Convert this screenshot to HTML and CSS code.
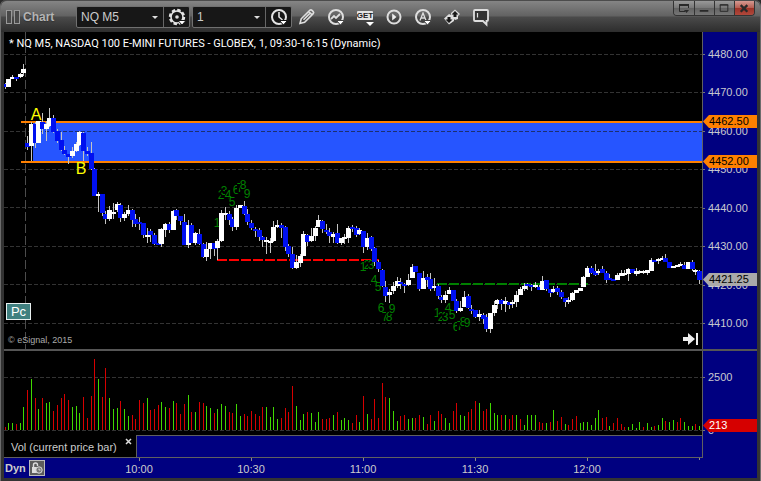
FILE: index.html
```html
<!DOCTYPE html>
<html lang="en">
<head>
<meta charset="utf-8">
<title>Chart</title>
<link rel="stylesheet" href="styles.css">
</head>
<body>
<main class="window">
  <header class="titlebar">
    <span class="grip"><i></i><i></i></span>
    <h1 class="title">Chart</h1>
    <div class="combo">
      <span class="pick pick-symbol"><select aria-label="Symbol"><option>NQ M5</option></select></span>
      <button class="combo-btn" aria-label="Symbol settings">
        <svg width="22" height="20" viewBox="0 0 22 20"><circle cx="11" cy="10" r="7" fill="none" stroke="#e4e4e4" stroke-width="2.4" stroke-dasharray="3.4 2.1"/><circle cx="11" cy="10" r="6" fill="none" stroke="#e4e4e4" stroke-width="1.6"/><circle cx="11" cy="10" r="1.8" fill="#ddd"/><path d="M12 13.500h8l-4 4.500z" fill="#fff" stroke="#161616"/></svg>
      </button>
    </div>
    <div class="combo">
      <span class="pick pick-interval"><select aria-label="Interval"><option>1</option></select></span>
      <button class="combo-btn" aria-label="Time template">
        <svg width="22" height="20" viewBox="0 0 22 20"><circle cx="11" cy="10" r="7" fill="none" stroke="#e4e4e4" stroke-width="2"/><path d="M11 5v5l3.500 3" fill="none" stroke="#e4e4e4" stroke-width="1.600"/><path d="M11.500 13.500h8l-4 4.500z" fill="#fff" stroke="#161616"/></svg>
      </button>
    </div>
    <nav class="tools" aria-label="Chart tools">
      <button aria-label="Draw"><svg width="20" height="20" viewBox="0 0 20 20"><path d="M3 16.500l1.200-4.700L13 3.200q1-.8 2 .2l1.200 1.200q1 1 0 2L7.600 15.300zM6.500 12.800l7-7M11.700 4.500l3.500 3.500" fill="none" stroke="#dedede" stroke-width="1.600"/></svg></button>
      <button aria-label="Studies"><svg width="20" height="20" viewBox="0 0 20 20"><circle cx="10" cy="10" r="7" fill="none" stroke="#dedede" stroke-width="2"/><path d="M5 12l3-3 2 2 4-4" fill="none" stroke="#dedede" stroke-width="1.800"/><path d="M10.500 13.500h8l-4 4.500z" fill="#fff" stroke="#444"/></svg></button>
      <button class="get" aria-label="Get studies"><span>GET</span></button>
      <button aria-label="Playback"><svg width="20" height="20" viewBox="0 0 20 20"><circle cx="10" cy="10" r="6.500" fill="none" stroke="#dedede" stroke-width="2"/><path d="M8.200 6.500v7l4.300-3.500z" fill="#eee"/></svg></button>
      <button aria-label="Alerts"><svg width="20" height="20" viewBox="0 0 20 20"><circle cx="10" cy="10" r="7" fill="none" stroke="#dedede" stroke-width="2"/><path d="M7 13.500l3-7.500 3 7.500M8 11h4" fill="none" stroke="#dedede" stroke-width="1.300"/><path d="M10.500 13.500h8l-4 4.500z" fill="#fff" stroke="#444"/></svg></button>
      <button aria-label="Trade"><svg width="20" height="20" viewBox="0 0 20 20"><path d="M2 11.500l5-4.500 2 1V6l4-3.500L18 7l-2 2v3l-3 1-1-1v2l-5 3.500z" fill="#dedede"/><path d="M13 4l3.500 3.500h-2V10h-3V7.500h-2zM7 16l-3.500-3.500h2V10h3v2.500h2z" fill="#181818"/></svg></button>
      <button aria-label="Comment"><svg width="20" height="20" viewBox="0 0 20 20"><path d="M4 3h12q1 0 1 1v9q0 1-1 1h-.5v3.500L12 14H4q-1 0-1-1V4q0-1 1-1z" fill="#333" stroke="#dedede" stroke-width="1.800"/><path d="M6.500 6v4.500" stroke="#dedede" stroke-width="1.200"/></svg></button>
    </nav>
    <div class="controls">
      <button aria-label="Window menu"><svg width="20" height="14" viewBox="0 0 20 14"><path d="M11 10.500H5.500v-7h9V7" fill="none" stroke="#292929"/><path d="M5 4h10" stroke="#292929" stroke-width="2"/><path d="M10 9h5l-2.500 3z" fill="#292929"/></svg></button>
      <button aria-label="Minimize"><svg width="20" height="14" viewBox="0 0 20 14"><path d="M5 10h9" stroke="#292929" stroke-width="2"/></svg></button>
      <button aria-label="Maximize"><svg width="20" height="14" viewBox="0 0 20 14"><path d="M5.500 3.500h8v7h-8zM5 4h9" fill="none" stroke="#292929"/></svg></button>
      <button class="close" aria-label="Close"><svg width="20" height="14" viewBox="0 0 20 14"><path d="M6 4l7 7M13 4l-7 7" stroke="#292929" stroke-width="2.400"/></svg></button>
    </div>
  </header>

  <section class="chart">
    <div class="pane">
      <svg id="price" class="plot" viewBox="4 32 698 317" role="img" aria-label="Price candles"></svg>
      <p class="caption">* NQ M5, NASDAQ 100 E-MINI FUTURES - GLOBEX, 1, 09:30-16:15 (Dynamic)</p>
      <div class="notes">
        <button class="pc">Pc</button>
        <small>© eSignal, 2015</small>
      </div>
      <button class="latest" aria-label="Go to latest bar"><svg width="16" height="16" viewBox="0 0 16 16"><path d="M0 6h5V2l7 6-7 6v-4H0z" fill="#eee"/><path d="M14 2v12" stroke="#eee" stroke-width="2"/></svg></button>
    </div>
    <div class="axis">
      <ol class="scale scale-price">
        <li>4480.00</li><li>4470.00</li><li>4460.00</li><li>4450.00</li><li>4440.00</li><li>4430.00</li><li>4420.00</li><li>4410.00</li>
      </ol>
      <span class="tag tag-high">4462.50</span>
      <span class="tag tag-low">4452.00</span>
      <span class="tag tag-last">4421.25</span>
    </div>
    <div class="divider"></div>
    <div class="pane">
      <svg id="volume" class="plot" viewBox="4 351 698 84" role="img" aria-label="Volume bars"></svg>
    </div>
    <div class="axis">
      <ol class="scale scale-volume"><li>2500</li><li>0</li></ol>
      <span class="tag tag-vol">213</span>
    </div>
    <div class="tabs">
      <div class="tab"><span>Vol (current price bar)</span><button aria-label="Close tab"><svg width="7" height="7" viewBox="0 0 7 7"><path d="M1 1l5 5M6 1l-5 5" stroke="#ddd" stroke-width="1.500"/></svg></button></div>
    </div>
    <div class="axis"></div>
    <footer class="timeline">
      <div class="mode"><span>Dyn</span><button aria-label="Lock time"><svg width="14" height="14" viewBox="0 0 14 14"><path d="M3.500 7V4a2 2 0 0 1 4 0v1" fill="none" stroke="#ddd" stroke-width="1.400"/><path d="M2 6h6v6H2z" fill="#ddd"/><circle cx="9" cy="9" r="3.200" fill="#777" stroke="#ddd"/><path d="M9 7.500V9h1.500" fill="none" stroke="#ddd"/></svg></button></div>
      <time>10:00</time><time>10:30</time><time>11:00</time><time>11:30</time><time>12:00</time>
      <span class="end"></span>
    </footer>
  </section>
</main>
<script src="chart.js"></script>
</body>
</html>
```
FILE: styles.css
```css
* { box-sizing: border-box; }
body {
  margin: 0;
  background: #2b2b2b;
  font: 11px/14px "Liberation Sans", Arial, sans-serif;
  color: #ccc;
}
button { margin: 0; padding: 0; border: 0; background: none; font: inherit; color: inherit; display: flex; align-items: center; justify-content: center; }
svg { display: block; }
.window {
  background: #333;
  border: solid #6c6c6c;
  border-width: 0 1px 1px;
  border-radius: 6px 6px 0 0;
  padding: 0 3px 3px;
}
.titlebar {
  display: flex;
  align-items: center;
  height: 32px;
  margin: 0 -3px;
  padding-left: 5px;
  border-top: 1px solid #4c4c4c;
  border-radius: 6px 6px 0 0;
  background: linear-gradient(#858585, #626262 48%, #4a4a4a 52%, #2d2d2d);
}
.grip { display: flex; gap: 2px; }
.grip i { width: 6px; height: 14px; border: 1px solid #999; background: #484848; }
.title { margin: 0 0 0 3px; width: 53px; font-size: 12px; line-height: 16px; color: #b4b4b4; text-shadow: 0 1px 1px #333; }
.combo { display: flex; height: 22px; margin-right: 2px; border: 1px solid #707070; border-radius: 2px; background: #171717; }
.pick { position: relative; display: flex; }
.pick::after { content: ""; position: absolute; right: 5px; top: 9px; border: 3px solid transparent; border-top-color: #ddd; border-bottom: 0; pointer-events: none; }
.pick select { appearance: none; border: 0; background: none; width: 100%; padding: 0 4px; color: #ccc; font: 12px/20px "Liberation Sans", Arial, sans-serif; }
.pick-symbol { width: 86px; }
.pick-interval { width: 72px; }
.combo-btn { width: 26px; border-left: 1px solid #666; }
.tools { display: flex; align-items: center; gap: 9px; margin-left: 3px; }
.tools button { width: 20px; height: 20px; }
.get { position: relative; font: bold 8px/9px "Liberation Sans", Arial, sans-serif; }
.get span { margin-bottom: 2px; background: #e4e4e4; color: #222; border-radius: 1px; }
.get::after { content: ""; position: absolute; right: 1px; bottom: 1px; border: 4px solid transparent; border-top-color: #fff; border-bottom: 0; }
.controls { display: flex; align-self: flex-start; margin: 0 5px 0 auto; border: 1px solid #333; border-top: 0; border-radius: 0 0 4px 4px; overflow: hidden; }
.controls button { width: 20px; height: 14px; background: linear-gradient(#999, #777 50%, #626262 50%, #767676); }
.controls button + button { border-left: 1px solid #333; }
.controls .close { background: linear-gradient(#d59a92, #b65c50 50%, #9c3226 50%, #b0483c); }

.chart { display: grid; grid-template-columns: minmax(0, 1fr) 55px; background: #000; }
.pane { position: relative; min-width: 0; }
.plot { width: 100%; height: auto; }
.plot text { text-anchor: middle; font-family: "Liberation Sans", Arial, sans-serif; }
.divider { grid-column: 1 / -1; height: 2px; background: #555; }
.axis { position: relative; border-left: 1px solid #606060; background: #000080; }
.scale { display: flex; flex-direction: column; justify-content: space-between; height: 100%; margin: 0; padding: 0 0 0 5px; list-style: none; color: #c8c8d0; }
.scale li { position: relative; }
.scale li::before { content: ""; position: absolute; left: -5px; top: 7px; width: 2px; height: 1px; background: #777; }
.scale-price { padding-top: 15px; padding-bottom: 19px; }
.scale-volume { height: 86px; margin-bottom: -2px; padding-top: 19px; }
.tag { position: absolute; left: 0; right: 0; height: 13px; padding-left: 6px; line-height: 13px; color: #000; clip-path: polygon(0 50%, 6px 0, 100% 0, 100% 100%, 6px 100%); }
.tag-high { top: 83px; background: #ff8000; }
.tag-low { top: 123px; background: #ff8000; }
.tag-last { top: 241px; background: #aaa; }
.tag-vol { top: 68px; background: #d60000; color: #fff; }
.caption { position: absolute; left: 5px; top: 5px; margin: 0; font-family: Roboto, "Liberation Sans", sans-serif; color: #fff; white-space: nowrap; }
.notes { position: absolute; left: 2px; bottom: 3px; display: flex; flex-direction: column; align-items: flex-start; gap: 15px; }
.notes small { padding-left: 2px; font-size: 9px; line-height: 11px; color: #aaa; }
.pc { width: 25px; height: 17px; border: 1px solid #e8f0f0; background: #408080; color: #fff; font-size: 13px; }
.latest { position: absolute; right: 3px; bottom: 2px; }

.tabs { display: flex; border-bottom: 1px solid #606060; }
.tabs::after { content: ""; flex: 1; border: solid #606060; border-width: 1px 0 0 1px; background: #000080; }
.tab { display: flex; width: 132px; height: 22px; padding: 5px 4px 0 7px; justify-content: space-between; }
.tab button { align-self: flex-start; margin-top: -2px; }
.timeline { grid-column: 1 / -1; display: grid; grid-template-columns: 79fr repeat(5, 112fr) 59fr 55px; height: 20px; background: #000080; }
.timeline time { position: relative; padding-top: 4px; text-align: center; }
.timeline time::before { content: ""; position: absolute; left: 50%; top: 0; width: 1px; height: 3px; background: #888; }
.end { justify-self: end; width: 3px; height: 2px; border-left: 1px solid #888; }
.mode { display: flex; align-items: center; gap: 3px; padding-left: 1px; font-weight: bold; }
.mode button { width: 16px; height: 16px; border: 1px solid #bbb; background: #5c5c5c; }
```
FILE: chart.js
```js
const NS = "http://www.w3.org/2000/svg";
const FIRST_BAR = -6;
const barX = (n) => Math.floor(27.55 + 3.7333 * (n + FIRST_BAR));

function add(parent, name, attrs, text) {
  const node = document.createElementNS(NS, name);
  for (const key in attrs) node.setAttribute(key, attrs[key]);
  if (text) node.textContent = text;
  parent.appendChild(node);
}
const box = (p, x, y, width, height, fill) => add(p, "rect", { x, y, width, height, fill });
const dash = (p, x1, y1, x2, y2, stroke, pattern, w) =>
  add(p, "line", { x1, y1, x2, y2, stroke, "stroke-dasharray": pattern, "stroke-width": w });

// direction, high, body top, body bottom, low
const candles = `b 83 84 87 89,w 79 79 87 87,w 75 77 79 79,b 77 77 79 81,w 73 74 77 78,w 64 69 73 76,
b 136 143 147 150,w 122 124 146 161,b 122 124 143 148,w 121 121 143 143,b 113 122 129 134,w 121 124 129 141,w 108 118 126 127,b 115 118 132 133,b 129 131 141 143,b 132 140 150 151,
b 146 150 154 155,b 154 154 157 164,w 147 151 156 158,w 142 144 151 152,w 131 132 145 146,b 132 133 151 161,b 147 151 154 156,b 142 153 169 170,b 168 169 196 196,w 192 194 196 212,
b 194 194 213 216,b 211 214 219 224,w 206 210 219 221,w 203 212 214 219,w 202 204 210 212,b 203 205 218 222,w 212 214 218 221,w 205 210 214 216,b 209 210 220 227,b 214 219 224 227,
b 217 222 224 230,b 223 223 235 238,w 228 235 237 243,b 229 231 235 242,b 233 235 244 245,b 229 243 245 245,w 228 229 244 247,w 223 224 230 237,b 222 224 230 233,w 210 211 230 230,
b 209 210 216 220,b 216 216 221 225,b 214 222 245 245,w 220 225 245 248,b 223 225 243 243,w 232 233 243 245,b 229 234 244 245,b 243 244 257 258,w 242 249 257 261,w 243 243 249 259,
b 243 243 249 256,w 239 241 248 260,w 210 213 241 242,w 207 213 215 220,b 211 214 220 225,b 217 219 227 231,w 205 208 227 230,w 205 205 208 208,b 201 206 214 215,b 209 214 222 225,
b 220 223 228 230,b 227 229 231 237,b 228 230 237 241,b 236 237 240 247,w 237 240 242 254,w 238 241 243 253,w 221 227 241 242,w 220 225 227 228,b 223 225 228 238,b 226 227 247 251,
b 244 246 254 257,b 247 254 268 269,w 255 262 268 269,w 254 256 263 267,w 231 234 256 256,b 234 235 242 246,w 228 236 241 242,w 226 228 236 241,w 215 220 227 227,b 220 221 229 233,
b 224 230 232 234,b 228 232 236 243,w 232 234 237 243,b 224 233 243 244,w 238 238 243 245,w 234 237 239 244,w 226 228 238 243,b 225 227 229 232,b 226 228 235 237,w 228 230 234 235,
b 231 231 247 253,w 233 238 247 250,b 236 237 249 251,b 247 248 262 266,b 260 262 269 272,b 269 270 286 287,b 281 287 296 302,w 289 292 295 303,w 282 286 291 294,w 277 281 286 288,
b 278 282 284 289,b 283 284 286 293,w 274 280 285 286,w 264 267 278 278,b 266 266 272 272,b 273 273 289 291,w 271 278 289 289,b 274 277 280 287,b 273 279 289 291,w 278 286 288 291,
b 284 286 296 299,b 295 297 300 303,w 291 295 300 303,w 287 290 294 294,b 290 290 301 301,b 299 301 311 313,w 301 308 311 312,w 291 297 307 307,b 294 296 308 309,b 305 309 311 314,
b 310 310 317 318,w 310 314 317 321,b 313 315 319 324,b 314 317 329 332,w 313 313 329 333,w 301 305 313 316,w 299 300 304 309,b 299 300 304 310,w 297 301 304 312,b 302 302 305 309,
w 300 302 304 308,w 291 295 302 307,w 287 289 295 295,w 283 286 289 291,b 283 284 286 290,b 284 285 287 291,w 282 285 287 288,b 285 287 290 290,w 276 281 290 290,b 280 280 289 291,
b 289 289 293 297,w 286 289 292 293,b 286 288 292 295,b 290 292 297 299,b 298 298 302 307,w 297 300 302 304,w 292 293 300 301,w 290 290 293 293,w 288 288 291 291,w 276 277 287 287,
w 266 268 277 277,b 266 268 273 274,b 264 271 275 276,w 269 271 273 275,b 266 269 273 273,b 271 273 280 283,b 274 278 280 280,b 279 279 281 281,w 273 275 280 280,w 270 273 276 276,
w 270 273 275 276,w 268 269 274 281,b 269 269 273 273,w 268 271 274 276,w 270 271 273 274,w 270 271 273 274,w 270 270 273 275,w 258 260 271 271,b 260 260 262 262,w 258 259 261 264,
w 256 258 260 260,b 254 258 262 262,b 262 262 268 268,w 266 266 268 268,w 265 265 267 267,w 262 264 266 266,b 262 265 269 269,w 262 262 269 269,b 260 262 269 271,w 269 270 272 275,
b 270 271 280 284`.split(",").map((s) => s.trim().split(" "));

// direction and bar height
const volumes = `r3 g7 g7 r6 g7 g23 r40 g51 r32 g21 r32 g27 g28 r19 r25 r32 r36 r30 g23 g24 g17 r33 r12 r34 r71 g51 r33 r62 g32 g21 g22 r29 g21 g14 r15 r11
r30 r27 g32 r20 r21 r25 g28 g23 r22 g29 r27 r16 r26 g35 r18 g18 r28 r27 g24 g22 r17 g21 g26 g24 r18 r17 g26 g14 r16 r14
r19 r16 r14 r23 g23 g13 g23 g11 r12 r22 r18 r44 g24 g10 g16 r18 g17 g8 g18 r11 r11 r12 g15 r18 g10 g12 g10 r7 r15 g8
r34 g16 r11 r31 r12 r47 r33 g32 g19 g9 r14 r15 g11 g12 r12 r15 g13 r6 r15 g9 r19 r16 g12 g7 r19 r27 g15 g14 r18 r21
r29 g27 r19 r21 g27 g17 g15 r15 g15 r11 r15 g15 r11 g5 g15 g15 g15 r8 r7 g7 r8 g20 r9 r13 g6 r5 r11 r14 g7 g8
g8 g5 g12 g20 r12 r13 g4 r7 r12 r6 r3 g3 g6 g2 g8 r3 g7 g3 r4 g5 g12 r9 g8 g10 r8 r12 g8 g4 g4 r6 g4 r6 g10 r16`.split(/\s+/);

const price = document.getElementById("price");
const gridRows = [54, 92, 131, 169, 207, 246, 284, 323];
gridRows.forEach((y) => dash(price, 4, y + 0.5, 702, y + 0.5, "#333", "4 2", 1));
dash(price, 25.5, 32, 25.5, 349, "#4c4c4c", "9 3", 1);

box(price, 33, 123, 669, 38, "#2655ff");
dash(price, 33, 131.5, 702, 131.5, "#1c2f70", "4 2", 1);
box(price, 21, 121, 681, 2, "#ff8000");
box(price, 21, 161, 681, 2, "#ff8000");
dash(price, 217, 260, 379, 260, "#f00", "10 2", 2);
dash(price, 437, 284, 588, 284, "#008000", "10 2", 2);

// sequence counts: digit, centre x, centre y
const counts = [
  [1, 217, 223], [2, 221, 195], [3, 224, 191], [4, 228, 195], [5, 232, 202], [6, 236, 190], [7, 240, 188], [8, 243, 185], [9, 247, 194],
  [1, 363, 267], [2, 367, 265], [3, 371, 265], [4, 374, 280], [5, 378, 287], [6, 381, 308], [7, 385, 317], [8, 389, 317], [9, 392, 309],
  [1, 437, 313], [2, 441, 317], [3, 445, 317], [4, 448, 308], [5, 452, 315], [6, 456, 327], [7, 460, 326], [8, 463, 322], [9, 467, 323]
];
counts.forEach(([digit, x, y]) => {
  box(price, x - 3, y - 5, 7, 10, "#000");
  add(price, "text", { x, y: y + 4, fill: "#008000", "font-size": 12 }, digit);
});

candles.forEach(([kind, high, top, bottom, low], n) => {
  const x = barX(n);
  box(price, x, high, 1, low - high, "#c4c4c4");
  box(price, x - 2, top, 5, bottom - top, kind === "w" ? "#fff" : "#0010f0");
});
add(price, "text", { x: 36, y: 120, fill: "#ff0", "font-size": 16 }, "A");
add(price, "text", { x: 81, y: 174, fill: "#ff0", "font-size": 16 }, "B");

const volume = document.getElementById("volume");
[377, 430].forEach((y) => dash(volume, 4, y + 0.5, 702, y + 0.5, "#333", "4 2", 1));
volumes.forEach((v, n) => {
  const h = Number(v.slice(1));
  box(volume, barX(n), 430 - h, 1, h, v[0] === "r" ? "#d60000" : "#40d800");
});
```
